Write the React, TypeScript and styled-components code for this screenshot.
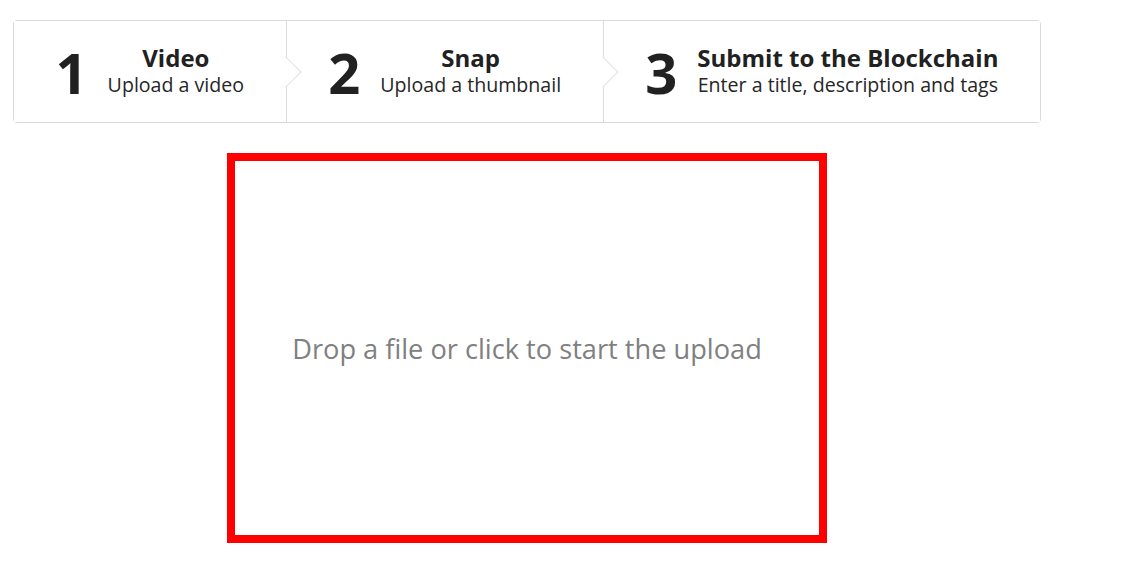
import styled, { createGlobalStyle } from 'styled-components';

const GlobalStyle = createGlobalStyle`
  body {
    margin: 0;
    background: #ffffff;
    font-family: "Open Sans", "Liberation Sans", sans-serif;
    color: rgba(0, 0, 0, 0.87);
  }
`;

const steps = [
  { num: '1', title: 'Video', desc: 'Upload a video' },
  { num: '2', title: 'Snap', desc: 'Upload a thumbnail' },
  { num: '3', title: 'Submit to the Blockchain', desc: 'Enter a title, description and tags' },
];

function App() {
  return (
    <Page>
      <GlobalStyle />
      <Steps>
        {steps.map((s, i) => (
          <Step key={s.num} last={i === steps.length - 1}>
            <StepNumber>{s.num}</StepNumber>
            <StepContent>
              <StepTitle>{s.title}</StepTitle>
              <StepDesc>{s.desc}</StepDesc>
            </StepContent>
          </Step>
        ))}
      </Steps>
      <DropZone>
        <DropText>Drop a file or click to start the upload</DropText>
      </DropZone>
    </Page>
  );
}

export default App;

const Page = styled.div`
  width: 1028px;
  padding: 20px 13px;
  display: flex;
  flex-direction: column;
  align-items: center;
  gap: 30px;
`;

const Steps = styled.div`
  display: flex;
  width: 100%;
  box-sizing: border-box;
  border: 1px solid #d9d9da;
  border-radius: 4px;
  background: #fff;
`;

const Step = styled.div<{ last: boolean }>`
  position: relative;
  flex: 1 0 auto;
  display: flex;
  align-items: center;
  justify-content: center;
  height: 101px;
  padding: 0 20px;
  border-right: ${(p) => (p.last ? 'none' : '1px solid #dcdcdd')};
  background: #fff;

  &::after {
    display: ${(p) => (p.last ? 'none' : 'block')};
    content: '';
    position: absolute;
    z-index: 2;
    top: 50%;
    right: 0;
    width: 21px;
    height: 21px;
    background: #fff;
    border-style: solid;
    border-color: #e2e2e3;
    border-width: 0 1px 1px 0;
    transform: translateY(-50%) translateX(50%) rotate(-45deg);
  }
`;

const StepNumber = styled.div`
  font-size: 56px;
  font-weight: 700;
  line-height: 1;
  color: #212121;
  margin-right: 20px;
`;

const StepContent = styled.div`
  display: flex;
  flex-direction: column;
  align-items: center;
  text-align: center;
`;

const StepTitle = styled.div`
  font-size: 24px;
  font-weight: 700;
  line-height: 26px;
  color: #212121;
`;

const StepDesc = styled.div`
  font-size: 19.6px;
  line-height: 28px;
  color: #262626;
`;

const DropZone = styled.div`
  width: 600px;
  height: 390px;
  box-sizing: border-box;
  border: 8px solid #ff0000;
  display: flex;
  align-items: center;
  justify-content: center;
`;

const DropText = styled.div`
  font-size: 27.2px;
  line-height: 36px;
  color: #808080;
  margin-top: 2px;
`;
